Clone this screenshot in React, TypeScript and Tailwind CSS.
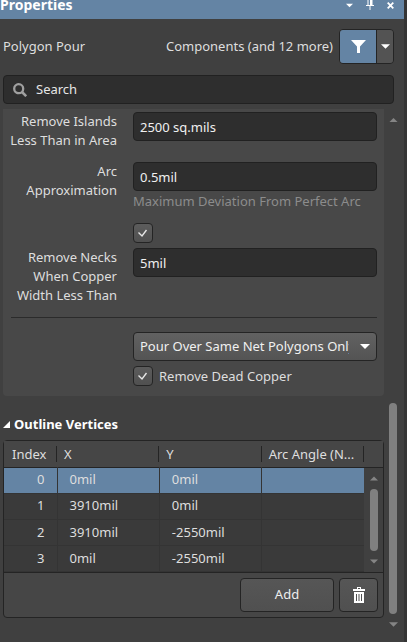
import { useState } from "react";
import type { ReactNode } from "react";

const field =
  "block h-[29px] w-full rounded border border-[#212121] bg-[#2e2e2e] px-1.5 text-[13px] text-[#f0f0f0] outline-none";

const button =
  "flex items-center justify-center rounded border border-[#242424] bg-linear-to-b from-[#565656] to-[#505050] text-[13px] text-[#eeeeee]";

const vertices = [
  { x: "0mil", y: "0mil" },
  { x: "3910mil", y: "0mil" },
  { x: "3910mil", y: "-2550mil" },
  { x: "0mil", y: "-2550mil" },
];

function Triangle({ up = false, className = "" }: { up?: boolean; className?: string }) {
  return (
    <svg viewBox="0 0 10 5" className={className} fill="currentColor" aria-hidden="true">
      <path d={up ? "M0 5 5 0l5 5z" : "M0 0h10L5 5z"} />
    </svg>
  );
}

function Row({ label, htmlFor, children }: { label?: string; htmlFor?: string; children: ReactNode }) {
  return (
    <div className="flex gap-4">
      <label htmlFor={htmlFor} className="w-[109px] shrink-0 text-right leading-[19px]">
        {label}
      </label>
      <div className="min-w-0 flex-1">{children}</div>
    </div>
  );
}

function Check({ id, label }: { id: string; label?: string }) {
  return (
    <span className="relative block size-5 shrink-0">
      <input
        id={id}
        type="checkbox"
        defaultChecked
        aria-label={label}
        className="peer block size-5 appearance-none rounded border border-[#242424] bg-linear-to-b from-[#5c5c5c] to-[#505050]"
      />
      <svg
        viewBox="0 0 20 20"
        className="pointer-events-none absolute inset-0 hidden size-5 peer-checked:block"
        fill="none"
        stroke="#e6e6e6"
        strokeWidth="1.4"
        aria-hidden="true"
      >
        <path d="M5.5 9.5 9 13l4.500-6" />
      </svg>
    </span>
  );
}

function ScrollBar() {
  return (
    <div className="flex w-5 shrink-0 flex-col items-center pt-[9px] pr-0.5 pb-[3px] text-[#858585]">
      <Triangle up className="h-[4px] w-[9px]" />
      <div className="flex w-2 flex-1 flex-col pb-2">
        <div className="flex-[282]" />
        <div className="flex-[211] rounded-full bg-[#808080]" />
      </div>
      <Triangle className="h-[5px] w-[9px]" />
    </div>
  );
}

function VertexTable() {
  const [selected, setSelected] = useState(0);
  return (
    <table className="w-full table-fixed border-collapse text-left">
      <colgroup>
        <col className="w-[53px]" />
        <col />
        <col />
        <col />
        <col className="w-[19px]" />
      </colgroup>
      <thead>
        <tr className="h-[26px] border-b border-[#242424] bg-[#464646]">
          {["Index", "X", "Y", "Arc Angle (N..."].map((name, i) => (
            <th key={name} className="p-0 font-normal">
              <div
                className={`flex h-4 items-center border-r border-[#242424] leading-5 whitespace-nowrap ${i === 0 ? "pl-2" : "pl-[7px]"}`}
              >
                {name}
              </div>
            </th>
          ))}
          <th className="p-0" />
        </tr>
      </thead>
      <tbody>
        {vertices.map((vertex, i) => (
          <tr
            key={i}
            onClick={() => setSelected(i)}
            className={`h-[26px] ${selected === i ? "bg-[#6484a4]" : "bg-[#3a3a3a]"}`}
          >
            <td className="border-r border-b border-[#343434] p-0 pr-3 text-right">{i}</td>
            <td className="border-r border-b border-[#343434] p-0 pl-3">{vertex.x}</td>
            <td className="border-r border-b border-[#343434] p-0 pl-3">{vertex.y}</td>
            <td className="border-b border-[#343434] p-0" />
            {i === 0 && (
              <td rowSpan={vertices.length} className="h-[104px] bg-[#404040] p-0 text-[#858585]">
                <div className="flex h-[104px] flex-col items-center pt-2 pb-2">
                  <Triangle up className="h-[5px] w-2" />
                  <div className="my-2 w-2 flex-1 rounded-full bg-[#808080]" />
                  <Triangle className="h-[5px] w-2" />
                </div>
              </td>
            )}
          </tr>
        ))}
      </tbody>
    </table>
  );
}

export default function App() {
  return (
    <div className="flex min-h-screen flex-col border-r-[3px] border-[#353535] bg-[#404040] font-['Noto_Sans','Open_Sans',sans-serif] text-[13px] text-[#dedede]">
      <header className="flex h-[19px] items-start justify-between bg-[#6484a4] pr-[10px] text-white">
        <h1 className="text-[14px] leading-[10px] font-bold">Properties</h1>
        <div className="flex h-[10px] items-center gap-[13px]">
          <button aria-label="Panel menu">
            <Triangle className="h-[5px] w-[7px]" />
          </button>
          <button aria-label="Pin panel">
            <svg viewBox="0 0 8 10" className="h-[10px] w-2" fill="currentColor" aria-hidden="true">
              <path fillRule="evenodd" d="M1.500 0h5v5H8v1H4.500v4h-1V6H0V5h1.500zM2.500 0v5H4V0z" />
            </svg>
          </button>
          <button aria-label="Close panel">
            <svg viewBox="0 0 7 7" className="size-[7px]" stroke="currentColor" strokeWidth="1.8" aria-hidden="true">
              <path d="m.7.7 5.600 5.600M6.300.7.7 6.300" />
            </svg>
          </button>
        </div>
      </header>

      <div className="flex items-center pt-[10px] pr-[10px] pl-[3px]">
        <span>Polygon Pour</span>
        <span className="ml-auto">Components (and 12 more)</span>
        <div className="ml-1.5 flex h-[35px] w-[55px] overflow-hidden rounded border border-[#242424]">
          <button
            aria-label="Filter"
            className="flex flex-1 items-center justify-center border-r border-[#242424] bg-[#6484a4]"
          >
            <svg viewBox="0 0 15 13" className="h-[13px] w-[15px]" fill="white" aria-hidden="true">
              <path d="M0 0h15L9 6.500V13H6V6.500z" />
            </svg>
          </button>
          <button aria-label="Filter options" className="flex w-4 items-center justify-center bg-[#535353] text-white">
            <Triangle className="h-[5px] w-[9px]" />
          </button>
        </div>
      </div>

      <div className="pt-[11px] pr-[10px] pl-[3px]">
        <div className="flex h-[29px] items-center gap-[9px] rounded border border-[#212121] bg-[#2e2e2e] pl-[9px]">
          <svg viewBox="0 0 14 14" className="size-[14px]" fill="none" stroke="#a0a0a0" aria-hidden="true">
            <circle cx="5.700" cy="5.700" r="4.500" strokeWidth="2.300" />
            <path d="m9 9 4.200 4.200" strokeWidth="2.500" />
          </svg>
          <input
            type="search"
            aria-label="Search"
            placeholder="Search"
            className="min-w-0 flex-1 bg-transparent outline-none placeholder:text-[#e6e6e6]"
          />
        </div>
      </div>

      <div className="flex pt-[5px] pl-[3px]">
        <main className="min-w-0 flex-1 pb-3">
          <section className="rounded-b bg-[#484848] pt-[3px] pr-[7px] pb-[10px] pl-[5px]">
            <Row label="Remove Islands Less Than in Area" htmlFor="islands">
              <input id="islands" className={field} defaultValue="2500 sq.mils" />
            </Row>
            <div className="pt-3">
              <Row label="Arc Approximation" htmlFor="arc">
                <input id="arc" className={field} defaultValue="0.5mil" />
                <p className="leading-5 whitespace-nowrap text-[#8c8c8c]">Maximum Deviation From Perfect Arc</p>
              </Row>
            </div>
            <div className="pt-3">
              <Row>
                <Check id="necks-enabled" label="Remove necks" />
              </Row>
            </div>
            <div className="pt-[5px]">
              <Row label="Remove Necks When Copper Width Less Than" htmlFor="necks">
                <input id="necks" className={field} defaultValue="5mil" />
              </Row>
            </div>
            <hr className="mt-3 mb-[14px] ml-[3px] border-[#2b2b2b]" />
            <Row>
              <div className="relative">
                <select
                  aria-label="Pour mode"
                  className="block h-[29px] w-full appearance-none rounded border border-[#242424] bg-linear-to-b from-[#616161] to-[#545454] pr-[27px] pl-1.5 text-[#f0f0f0] outline-none"
                >
                  <option>Pour Over Same Net Polygons Only</option>
                </select>
                <Triangle className="pointer-events-none absolute top-3 right-[7px] h-[5px] w-[10px] text-white" />
              </div>
              <div className="flex items-center gap-1.5 pt-[5px]">
                <Check id="dead-copper" />
                <label htmlFor="dead-copper" className="leading-5">
                  Remove Dead Copper
                </label>
              </div>
            </Row>
          </section>

          <section className="pt-[18px]">
            <h2 className="font-bold text-white">
              <button className="flex items-center gap-1 leading-5">
                <svg viewBox="0 0 7 7" className="size-[7px]" fill="currentColor" aria-hidden="true">
                  <path d="M7 0v7H0z" />
                </svg>
                Outline Vertices
              </button>
            </h2>
            <div className="mt-1.5 rounded border border-[#242424] bg-[#464646]">
              <VertexTable />
              <div className="flex justify-end gap-[5px] border-t border-[#242424] p-[5px]">
                <button className={`${button} h-[34px] w-[94px]`}>Add</button>
                <button className={`${button} h-[34px] w-[39px]`} aria-label="Delete vertex">
                  <svg viewBox="0 0 12 16" className="h-4 w-3" fill="white" aria-hidden="true">
                    <path
                      fillRule="evenodd"
                      d="M4 0h4v2h4v2H0V2h4zM5 1v1h2V1zM1 5h10v11H1zM3 7v7h1V7zm2.500 0v7h1V7zM8 7v7h1V7z"
                    />
                  </svg>
                </button>
              </div>
            </div>
          </section>
        </main>
        <ScrollBar />
      </div>
    </div>
  );
}
